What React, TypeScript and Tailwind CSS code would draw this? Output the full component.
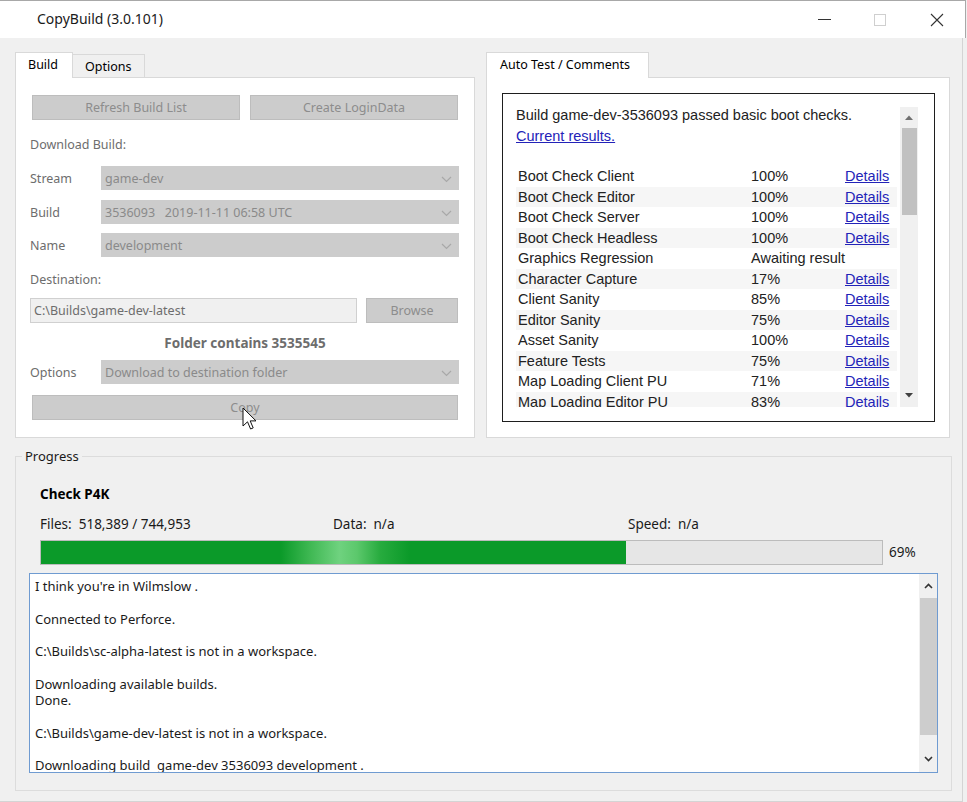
import React from "react";

const SEG = "font-['Noto_Sans',sans-serif]";
const ARIAL = "font-['Liberation_Sans',Arial,sans-serif]";

function Chevron() {
  return (
    <svg width="11" height="7" viewBox="0 0 11 7" className="shrink-0">
      <polyline points="1,1 5.5,5.5 10,1" fill="none" stroke="#a8a8a8" strokeWidth="1.2" />
    </svg>
  );
}

function Combo({ text }: { text: string }) {
  return (
    <div className="flex h-[24px] w-[358px] items-center justify-between bg-[#cccccc] pl-[4px] pr-[7px] pt-[2px] text-[#8a8a8a]">
      <span className="whitespace-pre">{text}</span>
      <Chevron />
    </div>
  );
}

function FieldRow({ label, text, className = "" }: { label: string; text: string; className?: string }) {
  return (
    <div className={"flex items-center " + className}>
      <span className="w-[71px] pt-[3px] text-[#6d6d6d]">{label}</span>
      <Combo text={text} />
    </div>
  );
}

function DisabledButton({ text, className = "" }: { text: string; className?: string }) {
  return (
    <div
      className={
        "flex h-[25px] items-center justify-center border border-[#bdbdbd] bg-[#cccccc] pt-[1px] text-[#8d8d8d] " +
        className
      }
    >
      {text}
    </div>
  );
}

const rows: [string, string, boolean][] = [
  ["Boot Check Client", "100%", true],
  ["Boot Check Editor", "100%", true],
  ["Boot Check Server", "100%", true],
  ["Boot Check Headless", "100%", true],
  ["Graphics Regression", "Awaiting result", false],
  ["Character Capture", "17%", true],
  ["Client Sanity", "85%", true],
  ["Editor Sanity", "75%", true],
  ["Asset Sanity", "100%", true],
  ["Feature Tests", "75%", true],
  ["Map Loading Client PU", "71%", true],
  ["Map Loading Editor PU", "83%", true],
];

const logLines = [
  "I think you're in Wilmslow .",
  "",
  "Connected to Perforce.",
  "",
  "C:\\Builds\\sc-alpha-latest is not in a workspace.",
  "",
  "Downloading available builds.",
  "Done.",
  "",
  "C:\\Builds\\game-dev-latest is not in a workspace.",
  "",
  "Downloading build  game-dev 3536093 development .",
];

export default function App() {
  return (
    <div className={"relative h-[802px] w-[967px] overflow-hidden bg-[#f0f0f0] text-[12.5px] text-black " + SEG}>
      {/* Title bar */}
      <div className="flex h-[38px] w-[966px] items-center border-t border-r border-[#a8a8a8] bg-white">
        <span className="ml-[37px] -mt-[2px] text-[14px] text-[#1a1a1a]">CopyBuild (3.0.101)</span>
        <div className="ml-auto flex items-center">
          <div className="flex w-[56px] justify-center">
            <div className="h-px w-[13px] bg-[#333]" />
          </div>
          <div className="flex w-[56px] justify-center">
            <div className="h-[12px] w-[12px] border border-[#cfcfcf]" />
          </div>
          <div className="flex w-[57px] justify-center">
            <svg width="14" height="14" viewBox="0 0 14 14">
              <path d="M1 1 L13 13 M13 1 L1 13" stroke="#333" strokeWidth="1.1" />
            </svg>
          </div>
        </div>
      </div>

      {/* Body */}
      <div className="h-[764px] w-[963px] border-r border-b border-[#d4d4d4] pl-[15px] pt-[14px]">
        <div className="flex">
          {/* Left tab control */}
          <div className="flex w-[460px] flex-col">
            <div className="flex h-[25px] items-end">
              <div className="relative z-10 -mb-px flex h-[26px] w-[58px] items-center border border-b-0 border-[#d9d9d9] bg-white pl-[12px]">
                Build
              </div>
              <div className="flex h-[23px] w-[72px] items-center border border-b-0 border-l-0 border-[#d9d9d9] bg-[#f0f0f0] pl-[12px] pt-[2px]">
                Options
              </div>
            </div>
            <div className="relative h-[361px] border border-[#d9d9d9] bg-white pl-[14px] pt-[17px]">
              <div className="ml-[2px] flex gap-[10px]">
                <DisabledButton text="Refresh Build List" className="w-[208px]" />
                <DisabledButton text="Create LoginData" className="w-[208px]" />
              </div>
              <div className="mt-[14px] flex h-[20px] items-center pt-[2px] text-[#6d6d6d]">Download Build:</div>
              <FieldRow className="mt-[12px]" label="Stream" text="game-dev" />
              <FieldRow className="mt-[10px]" label="Build" text="3536093   2019-11-11 06:58 UTC" />
              <FieldRow className="mt-[9px]" label="Name" text="development" />
              <div className="mt-[12px] flex h-[20px] items-center pt-[2px] text-[#6d6d6d]">Destination:</div>
              <div className="mt-[9px] flex items-center gap-[9px]">
                <div className="flex h-[25px] w-[327px] items-center border border-[#d0d0d0] bg-[#f0f0f0] pl-[3px] pt-[1px] text-[#6d6d6d]">
                  C:\Builds\game-dev-latest
                </div>
                <DisabledButton text="Browse" className="w-[92px]" />
              </div>
              <div className="mt-[9px] flex h-[20px] w-[430px] items-center justify-center pt-[2px] text-[13.5px] font-bold text-[#6d6d6d]">
                Folder contains 3535545
              </div>
              <FieldRow className="mt-[8px]" label="Options" text="Download to destination folder" />
              <DisabledButton text="Copy" className="ml-[2px] mt-[11px] w-[426px]" />
              {/* mouse cursor */}
              <svg
                className="absolute left-[226px] top-[329px]"
                width="15"
                height="24"
                viewBox="0 0 15 24"
              >
                <path
                  d="M1 1 L1 19 L5.5 14.8 L8.6 22 L11.2 20.9 L8.2 13.9 L14 13.9 Z"
                  fill="white"
                  stroke="#111"
                  strokeWidth="1"
                  strokeLinejoin="round"
                />
              </svg>
            </div>
          </div>

          {/* Right tab control */}
          <div className="ml-[11px] flex w-[464px] flex-col">
            <div className="flex h-[25px] items-end">
              <div className="relative z-10 -mb-px flex h-[26px] w-[163px] items-center border border-b-0 border-[#d9d9d9] bg-white pl-[13px]">
                Auto Test / Comments
              </div>
            </div>
            <div className="h-[361px] border border-[#d9d9d9] bg-white pl-[15px] pt-[15px]">
              <div className="h-[329px] w-[433px] border border-[#1e1e1e] pl-[13px] pt-[13px]">
                <div className={"flex h-[300px] w-[402px] text-[14.5px] text-[#222] " + ARIAL}>
                  <div className="h-full w-[384px] overflow-hidden">
                    <div className="-mt-[2px] leading-[21px]">
                      <div>Build game-dev-3536093 passed basic boot checks.</div>
                      <div className="text-[#2323b8] underline">Current results.</div>
                    </div>
                    <div className="mt-[19px] w-[381px]">
                      {rows.map(([name, pct, link], i) => (
                        <div
                          key={name}
                          className={
                            "grid h-[20.5px] grid-cols-[235px_94px_1fr] items-center " +
                            (i % 2 === 1 ? "bg-[#f6f6f6]" : "bg-white")
                          }
                        >
                          <span className="pl-[2px]">{name}</span>
                          {link ? (
                            <>
                              <span>{pct}</span>
                              <span className="text-[#2323b8] underline">Details</span>
                            </>
                          ) : (
                            <span className="col-span-2 whitespace-nowrap">{pct}</span>
                          )}
                        </div>
                      ))}
                    </div>
                  </div>
                  <div className="flex h-full w-[18px] flex-col items-center bg-[#f0f0f0]">
                    <div className="flex h-[21px] items-center">
                      <svg width="8" height="5" viewBox="0 0 8 5">
                        <path d="M0 5 L4 0.5 L8 5 Z" fill="#707070" />
                      </svg>
                    </div>
                    <div className="h-[87px] w-[15px] bg-[#c1c1c1]" />
                    <div className="flex-1" />
                    <div className="flex h-[24px] items-center">
                      <svg width="8" height="5" viewBox="0 0 8 5">
                        <path d="M0 0 L4 4.5 L8 0 Z" fill="#404040" />
                      </svg>
                    </div>
                  </div>
                </div>
              </div>
            </div>
          </div>
        </div>

        {/* Progress group */}
        <div className="relative mt-[18px] h-[335px] w-[937px] border border-[#dcdcdc] pl-[13px] pt-[27px]">
          <span className="absolute -top-[10px] left-[6px] bg-[#f0f0f0] px-[3px] text-[13px] text-[#1a1a1a]">
            Progress
          </span>
          <div className="ml-[11px] flex h-[20px] items-center text-[13.5px] font-bold">Check P4K</div>
          <div className="ml-[11px] mt-[10px] flex h-[20px] items-center whitespace-pre text-[13.5px] text-[#1a1a1a]">
            <span className="w-[293px]">Files:  518,389 / 744,953</span>
            <span className="w-[295px]">Data:  n/a</span>
            <span>Speed:  n/a</span>
          </div>
          <div className="ml-[11px] mt-[6px] flex items-center">
            <div className="h-[25px] w-[843px] border border-[#bcbcbc] bg-[#e6e6e6]">
              <div className="h-full w-[585px] bg-[linear-gradient(90deg,#0b9a29_0%,#0b9a29_41%,#3fb853_46%,#6fd27f_51%,#5cc86c_54%,#27ab3e_58%,#0b9a29_63%,#0b9a29_100%)]" />
            </div>
            <span className="ml-[6px] text-[13.5px] text-[#1a1a1a]">69%</span>
          </div>
          <div className="mt-[8px] flex h-[200px] w-[909px] border border-[#6f9bd1] bg-white">
            <div className="h-full flex-1 overflow-hidden pl-[5px] pt-[4px] text-[13px] leading-[16.3px] text-[#1a1a1a]">
              {logLines.map((l, i) => (
                <div key={i} className="h-[16.3px] whitespace-pre">
                  {l}
                </div>
              ))}
            </div>
            <div className="flex h-full w-[18px] flex-col items-center bg-[#f0f0f0]">
              <div className="flex h-[24px] items-center">
                <svg width="9" height="6" viewBox="0 0 9 6">
                  <polyline points="1,5 4.5,1.5 8,5" fill="none" stroke="#333" strokeWidth="1.6" />
                </svg>
              </div>
              <div className="h-[137px] w-[17px] bg-[#cdcdcd]" />
              <div className="flex-1" />
              <div className="flex h-[26px] items-center">
                <svg width="9" height="6" viewBox="0 0 9 6">
                  <polyline points="1,1 4.5,4.5 8,1" fill="none" stroke="#333" strokeWidth="1.6" />
                </svg>
              </div>
            </div>
          </div>
        </div>
      </div>
    </div>
  );
}
